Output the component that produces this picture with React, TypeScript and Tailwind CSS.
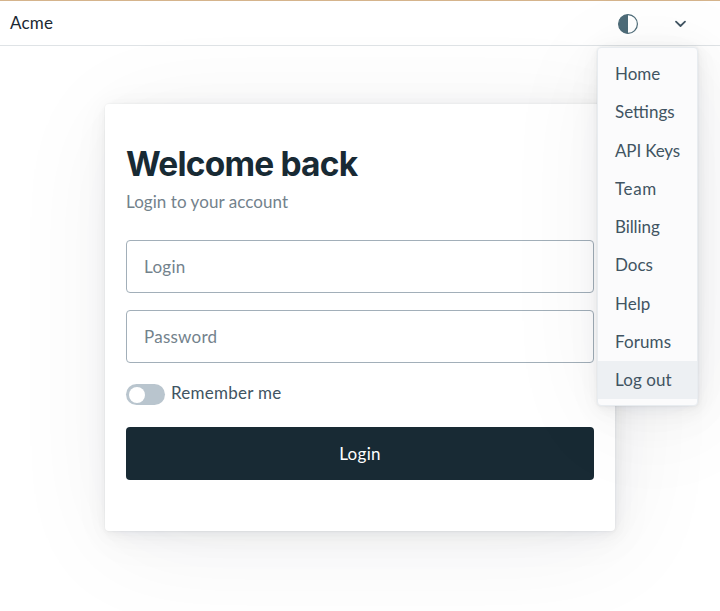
const panelShadow =
  'shadow-[0.25px_0.5px_3px_rgba(27,40,50,0.017),0.57px_1.14px_6.8px_rgba(27,40,50,0.024),1.06px_2.1px_12.75px_rgba(27,40,50,0.03),1.9px_3.8px_23px_rgba(27,40,50,0.036),3.5px_7.1px_42.5px_rgba(27,40,50,0.043),6px_14px_112px_rgba(27,40,50,0.06),0_0_0_1px_rgba(27,40,50,0.015)]';

const menu = [
  { label: 'Home', tracking: '' },
  { label: 'Settings', tracking: '' },
  { label: 'API Keys', tracking: 'tracking-[-0.15px]' },
  { label: 'Team', tracking: 'tracking-[0.6px]' },
  { label: 'Billing', tracking: 'tracking-[-0.1px]' },
  { label: 'Docs', tracking: '' },
  { label: 'Help', tracking: '' },
  { label: 'Forums', tracking: 'tracking-[0.1px]' },
  { label: 'Log out', tracking: 'tracking-[0.1px]' },
];

function Menu() {
  return (
    <ul
      className={`absolute right-[22px] top-[47px] z-10 h-[359px] w-[101px] rounded-[4px] border border-[#e8ecf0] bg-[#fbfbfc] pt-[7px] text-[#415462] ${panelShadow}`}
    >
      {menu.map(({ label, tracking }) => (
        <li
          key={label}
          className={`flex h-[38.25px] items-center whitespace-nowrap pl-[17px] ${tracking} ${label === 'Log out' ? 'bg-[#edf0f3]' : ''}`}
        >
          {label}
        </li>
      ))}
    </ul>
  );
}

function Header() {
  return (
    <header className="flex h-[46px] items-center border-b border-t border-b-[#dfe3e6] border-t-[#d5b48c] pl-[10px] pr-[33px] text-[#1b2832]">
      <span className="tracking-[0.2px]">Acme</span>
      <svg className="ml-auto mt-px size-5" viewBox="0 0 20 20" aria-label="Theme">
        <circle cx="10" cy="10" r="9.4" fill="none" stroke="#4d6b78" strokeWidth="1.2" />
        <path d="M10 .6a9.4 9.4 0 0 0 0 18.8z" fill="#4d6b78" />
      </svg>
      <svg className="ml-[35px] mt-px size-[14px]" viewBox="0 0 14 14" aria-label="Menu">
        <path d="m3 4.7 4.5 4.3 4.5-4.3" fill="none" stroke="#415462" strokeWidth="1.8" strokeLinecap="round" strokeLinejoin="round" />
      </svg>
    </header>
  );
}

export default function App() {
  return (
    <div className="relative h-[611px] w-[720px] overflow-hidden bg-white font-['Lato',sans-serif] text-[17px] leading-6">
      <Header />
      <Menu />
      <main className={`ml-[105px] mt-[58px] h-[427px] w-[510px] rounded-[4px] bg-white px-[21px] pt-[40px] ${panelShadow}`}>
        <h1 className="h-10 whitespace-nowrap font-['Inter',sans-serif] text-[33.5px] font-bold leading-10 tracking-[-0.8px] text-[#182a34]">
          Welcome back
        </h1>
        <p className="mt-[6px] tracking-[0.06px] text-[#73828c]">Login to your account</p>
        <div className="mt-[26px] flex h-[53px] items-center rounded-[4px] border border-[#a2afb9] pl-[17px] tracking-[0.3px] text-[#73828c]">
          Login
        </div>
        <div className="mt-[17px] flex h-[53px] items-center rounded-[4px] border border-[#a2afb9] pl-[17px] tracking-[0.25px] text-[#73828c]">
          Password
        </div>
        <div className="mt-[18px] flex h-6 gap-[6px] text-[#415462]">
          <span className="mt-[3px] flex h-[21px] w-[39px] items-center rounded-full bg-[#b9c5ce] pl-[3px]">
            <span className="size-[16px] rounded-full bg-white" />
          </span>
          <span className="tracking-[0.25px]">Remember me</span>
        </div>
        <button className="mt-[22px] flex h-[53px] w-full items-center justify-center rounded-[4px] bg-[#182a34] tracking-[0.3px] text-white">
          Login
        </button>
      </main>
    </div>
  );
}
